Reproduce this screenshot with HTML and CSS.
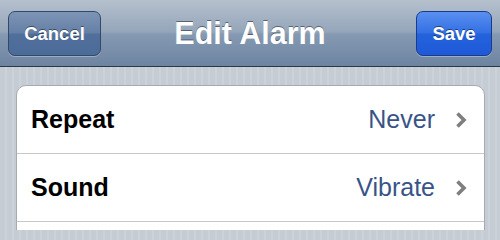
FILE: index.html
```html
<!DOCTYPE html>
<html>
<head>
<meta charset="utf-8">
<link rel="stylesheet" href="styles.css">
</head>
<body>
<header class="nav">
  <button class="btn btn-cancel">Cancel</button>
  <h1 class="title">Edit Alarm</h1>
  <button class="btn btn-save">Save</button>
</header>
<main class="content">
  <ul class="group">
    <li class="row">
      <span class="label">Repeat</span>
      <span class="value">Never</span>
      <svg class="chev" viewBox="0 0 12 18" width="12" height="18"><polyline points="2.5,2.5 9,9 2.5,15.5"/></svg>
    </li>
    <li class="row">
      <span class="label">Sound</span>
      <span class="value">Vibrate</span>
      <svg class="chev" viewBox="0 0 12 18" width="12" height="18"><polyline points="2.5,2.5 9,9 2.5,15.5"/></svg>
    </li>
    <li class="row row-empty"></li>
  </ul>
</main>
</body>
</html>
```
FILE: styles.css
```css
html, body {
  margin: 0;
  padding: 0;
  overflow: hidden;
  height: 230px;
}
body {
  font-family: "Liberation Sans", Arial, sans-serif;
  background-color: #c6cdd5;
  background-image: repeating-linear-gradient(90deg, #c5ccd4 0 5px, #cbd2d9 5px 7px);
}
.nav {
  height: 67px;
  border-bottom: 1px solid #2c3746;
  background: linear-gradient(#b5c0cd 0%, #95a6ba 48%, #8599b2 52%, #6d84a1 100%);
  display: grid;
  grid-template-columns: 1fr auto 1fr;
  align-items: center;
  padding: 0 8px 0 8px;
  box-sizing: border-box;
}
.title {
  margin: 0;
  color: #fff;
  font-size: 30.5px;
  font-weight: bold;
  text-shadow: 0 -1px 0 rgba(40, 50, 65, 0.6);
  padding-top: 1px;
}
.btn {
  height: 45px;
  border-radius: 7px;
  font-family: "Liberation Sans", Arial, sans-serif;
  font-size: 18.5px;
  font-weight: bold;
  color: #fff;
  text-shadow: 0 -1px 0 rgba(0, 0, 0, 0.45);
  padding: 0;
  margin-top: 1px;
  box-shadow: 0 1px 0 rgba(255, 255, 255, 0.3);
}
.btn-cancel {
  justify-self: start;
  width: 93px;
  border: 1px solid #34496a;
  background: linear-gradient(#7d94b5 0%, #6580a6 48%, #516f9b 52%, #4b6b99 100%);
}
.btn-save {
  justify-self: end;
  width: 76px;
  border: 1px solid #1b3a8c;
  background: linear-gradient(#5a8ff0 0%, #3470e4 48%, #2462dc 52%, #1f59d8 100%);
}
.content {
  height: 163px;
  overflow: hidden;
  box-sizing: border-box;
  padding: 18px 15px 0 16px;
}
.group {
  list-style: none;
  margin: 0;
  padding: 0;
  background: #fff;
  border: 1px solid #a6abb2;
  border-radius: 10px;
}
.row {
  height: 67px;
  border-bottom: 1px solid #c8c8c8;
  display: flex;
  align-items: center;
  padding: 0 17px 0 14px;
}
.row:last-child {
  border-bottom: none;
}
.label {
  flex: 1;
  font-size: 25px;
  font-weight: bold;
  color: #000;
}
.value {
  font-size: 25px;
  color: #385487;
}
.chev {
  margin-left: 20px;
  fill: none;
  stroke: #7f7f7f;
  stroke-width: 3.6;
  stroke-linejoin: miter;
}
```
